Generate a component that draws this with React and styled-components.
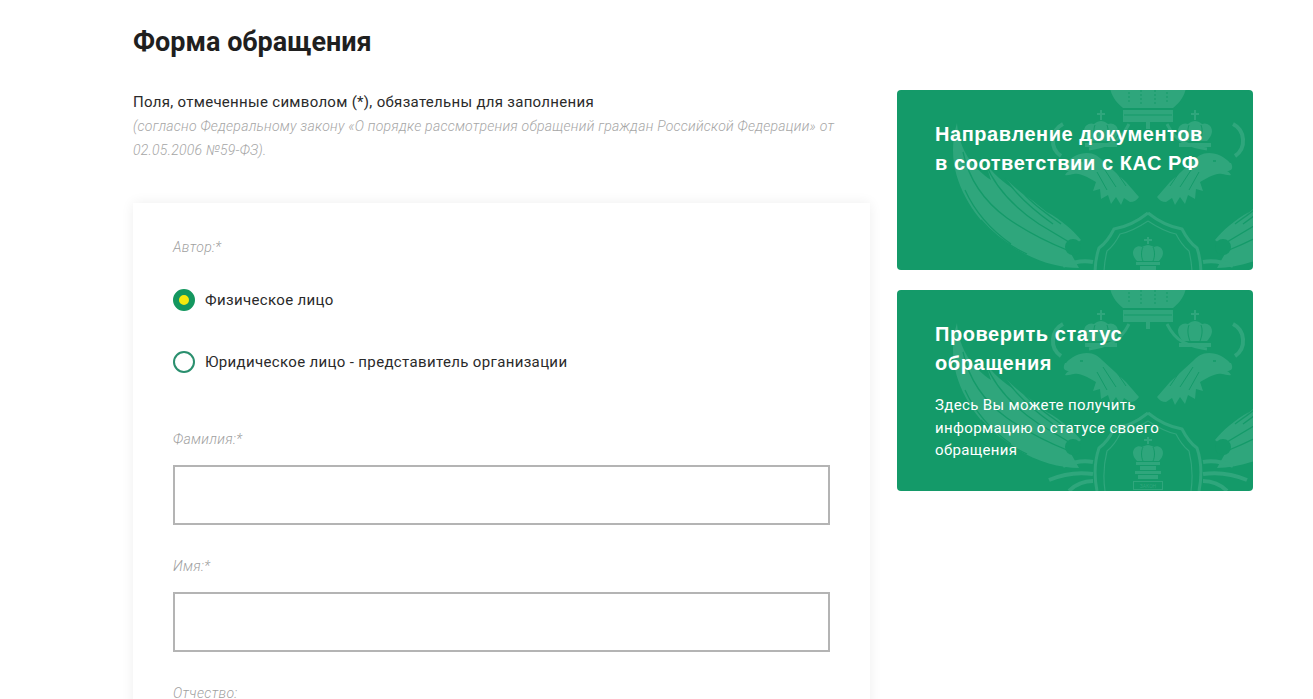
import React from "react";
import styled, { createGlobalStyle } from "styled-components";

const Global = createGlobalStyle`
  html, body { margin: 0; padding: 0; background: #fff; height: 699px; overflow: hidden; }
  * { box-sizing: border-box; }
  body { font-family: Roboto, "Noto Sans", sans-serif; color: #222; }
`;
const Page = styled.div`
  display: grid;
  grid-template-columns: 737px 356px;
  column-gap: 27px;
  padding: 0 0 0 133px;
  height: 699px;
  overflow: hidden;
`;
const Main = styled.main`
  display: flex;
  flex-direction: column;
  align-items: stretch;
`;
const Title = styled.h1`
  margin: 25px 0 0;
  font: 700 27px/34px Roboto, sans-serif;
  color: #1f1f1f;
`;
const Note = styled.p`
  margin: 33px 0 0;
  font: 400 15px/20px Roboto, sans-serif;
  color: #2a2a2a;
  letter-spacing: 0.3px;
`;
const Hint = styled.p`
  margin: 2px 0 0;
  font: italic 300 14px/24px Roboto, sans-serif;
  color: #a6a6a6;
  width: 710px;
  letter-spacing: 0.25px;
`;
const Card = styled.section`
  margin-top: 41px;
  padding: 35px 40px 0;
  background: #fff;
  box-shadow: 0 0 12px rgba(0, 0, 0, 0.07);
  flex: 1;
`;
const Label = styled.div`
  font: italic 300 14px/18px Roboto, sans-serif;
  color: #9f9f9f;
  letter-spacing: 0.35px;
`;
const Radios = styled.div`
  display: flex;
  flex-direction: column;
  gap: 40px;
  margin-top: 33px;
  margin-bottom: 57px;
`;
const Radio = styled.label`
  display: flex;
  align-items: center;
  gap: 10px;
  height: 22px;
  font: 400 15px/22px Roboto, sans-serif;
  color: #2a2a2a;
  letter-spacing: 0.35px;
`;
const Dot = styled.span`
  width: 22px;
  height: 22px;
  border-radius: 50%;
  flex: none;
  border: ${p => (p.$on ? "6px solid #14975f" : "2px solid #2a8f6e")};
  background: ${p => (p.$on ? "#f6e90e" : "#fff")};
`;
const Field = styled.div`
  margin-bottom: 32px;
`;
const Input = styled.input`
  display: block;
  width: 657px;
  height: 60px;
  margin-top: 17px;
  border: 2px solid #b4b4b4;
  background: #fff;
  outline: none;
`;
const Side = styled.aside`
  display: flex;
  flex-direction: column;
  gap: 20px;
  padding-top: 90px;
`;
const Banner = styled.a`
  position: relative;
  display: block;
  overflow: hidden;
  height: ${p => p.$h}px;
  border-radius: 4px;
  background: #149a69;
  padding: 30px 38px 0;
  color: #fff;
`;
const BannerTitle = styled.div`
  position: relative;
  font: 700 20px/29px "Liberation Sans", Arial, sans-serif;
  color: #fff;
  letter-spacing: 0.56px;
`;
const BannerText = styled.div`
  position: relative;
  margin-top: 16px;
  font: 400 15px/22.5px Roboto, sans-serif;
  color: #fff;
  letter-spacing: 0.35px;
`;
const EmblemSvg = styled.svg`
  position: absolute;
  left: 0;
  top: 0;
  width: 356px;
  height: 201px;
`;

const TINT = "#2fa67c";
const BG = "#149a69";

const Half = () => (
  <g>
    {/* side crown */}
    <path d="M203 20h2v3h3v2h-3v5h-2v-5h-3v-2h3z" fill={TINT} />
    <path d="M187 41c0-6 6-9 10-7 2-2 5-3 7-3s5 1 7 3c4-2 10 1 10 7 0 4-3 8-5 10h-24c-2-2-5-6-5-10z" fill={TINT} />
    <path d="M198 35c-2 5-1 11 1 16M210 35c2 5 1 11-1 16" fill="none" stroke={BG} strokeWidth="1" />
    <path d="M188 53h32v4h-32z" fill={TINT} />

    {/* ribbons */}
    <path d="M232 34c-4 8-8 14-16 18s-16 6-24 7" fill="none" stroke={TINT} strokeWidth="3" />
    <path d="M166 34c-12 6-14 24-2 32" fill="none" stroke={TINT} strokeWidth="4" />

    {/* wing: staggered feather tips along the upper edge */}
    <path d="M60 33C62 60 76 78 94 90L88 72C96 84 106 92 118 100L108 88C118 98 128 106 138 114L128 105C140 114 150 122 162 132L150 122C164 130 176 140 184 150L172 160L182 178C160 178 134 170 108 152 82 134 62 104 57 74 55 60 56 46 60 33z" fill={TINT} />
    <path d="M66 62C72 90 88 112 110 128 130 142 150 152 170 160M88 72C98 98 118 118 142 134 152 140 162 146 172 152M108 88C120 106 136 120 156 134M128 105C138 116 150 124 164 134M68 100C78 122 94 140 114 154M84 130C96 144 112 156 130 164" fill="none" stroke={BG} strokeWidth="1.3" />

    {/* head and feathered neck */}
    <path d="M169 73c5-6 13-10 21-10 7 0 11 3 15 7l24 22 13 15c-2 3-5 5-9 5l-6-4-3 7-5-8-5 7-3-9-7 4-1-10-7 2 3-9-9-5c-5-2-9-4-13-3-3 0-6 2-9 1 1-2 2-3 4-4-4 0-7-2-4-8z" fill={TINT} />
    <path d="M206 77l13 20M200 82l10 18M214 74l15 22" fill="none" stroke={BG} strokeWidth="1" />
    <path d="M183 71l3 0" stroke={BG} strokeWidth="1.6" />

    {/* hollow under the wing and the claws below it */}
    <circle cx="176" cy="157" r="8" fill={BG} />
    <path d="M166 176c10-4 20-6 30-4M152 190c14-6 30-8 44-6M172 201c6-6 14-10 24-10" fill="none" stroke={TINT} strokeWidth="4" />
  </g>
);

const Emblem = ({ $law }) => (
  <EmblemSvg viewBox="0 0 356 201" aria-hidden="true">
    <Half />
    <g transform="translate(502 0) scale(-1 1)"><Half /></g>

    {/* big crown */}
    <path d="M213 -2c2 10 8 16 13 20h50c5-4 11-10 13-20z" fill={TINT} />
    <path d="M232 2v12M244 0v14M258 0v14M270 2v12" stroke={BG} strokeWidth="1" strokeDasharray="2 2" />
    <path d="M226 20h50v12h-50z" fill={TINT} />
    <path d="M227 25h48" stroke={BG} strokeWidth="1" />
    <path d="M249 32h4v7h-4z" fill={TINT} />

    {/* shield */}
    <path d="M251 123c10 8 22 14 34 16 4 8 8 14 15 19 4 12 5 28 2 43M251 123c-10 8-22 14-34 16-4 8-8 14-15 19-4 12-5 28-2 43" fill="none" stroke={TINT} strokeWidth="3" />
    <path d="M251 131c9 6 18 11 28 13 4 8 8 13 13 17 3 12 4 26 2 40M251 131c-9 6-18 11-28 13-4 8-8 13-13 17-3 12-4 26-2 40" fill="none" stroke={TINT} strokeWidth="1.2" />

    {/* crown in the shield */}
    <path d="M250 147h2v2h3v2h-3v3h-2v-3h-3v-2h3z" fill={TINT} />
    <path d="M236 163c0-5 5-8 9-6 2-1 4-2 6-2s4 1 6 2c4-2 9 1 9 6 0 3-2 6-4 8h-22c-2-2-4-5-4-8z" fill={TINT} />
    <path d="M246 157c-2 4-2 10 0 14M256 157c2 4 2 10 0 14" fill="none" stroke={BG} strokeWidth="1" />
    <path d="M239 172h24v3h-24zM243 176h16v4h-16zM238 181h26v3h-26zM241 185h20v4h-20z" fill={TINT} />
    <rect x="236.5" y="191.5" width="29" height="8" fill="none" stroke={TINT} strokeWidth="1" />
    {$law && <text x="251" y="198" fontSize="5" fontFamily="Roboto, sans-serif" textAnchor="middle" fill={TINT}>ЗАКОН</text>}
  </EmblemSvg>
);

export default function App() {
  return (
    <>
      <Global />
      <Page>
        <Main>
          <Title>Форма обращения</Title>
          <Note>Поля, отмеченные символом (*), обязательны для заполнения</Note>
          <Hint>(согласно Федеральному закону «О порядке рассмотрения обращений граждан Российской Федерации» от 02.05.2006 №59-ФЗ).</Hint>
          <Card>
            <Label>Автор:*</Label>
            <Radios>
              <Radio><Dot $on />Физическое лицо</Radio>
              <Radio><Dot />Юридическое лицо - представитель организации</Radio>
            </Radios>
            <Field><Label>Фамилия:*</Label><Input /></Field>
            <Field><Label>Имя:*</Label><Input /></Field>
            <Field><Label>Отчество:</Label><Input /></Field>
          </Card>
        </Main>
        <Side>
          <Banner $h={180}>
            <Emblem />
            <BannerTitle>Направление документов<br />в соответствии с КАС РФ</BannerTitle>
          </Banner>
          <Banner $h={201}>
            <Emblem $law />
            <BannerTitle>Проверить статус<br />обращения</BannerTitle>
            <BannerText>Здесь Вы можете получить<br />информацию о статусе своего<br />обращения</BannerText>
          </Banner>
        </Side>
      </Page>
    </>
  );
}
